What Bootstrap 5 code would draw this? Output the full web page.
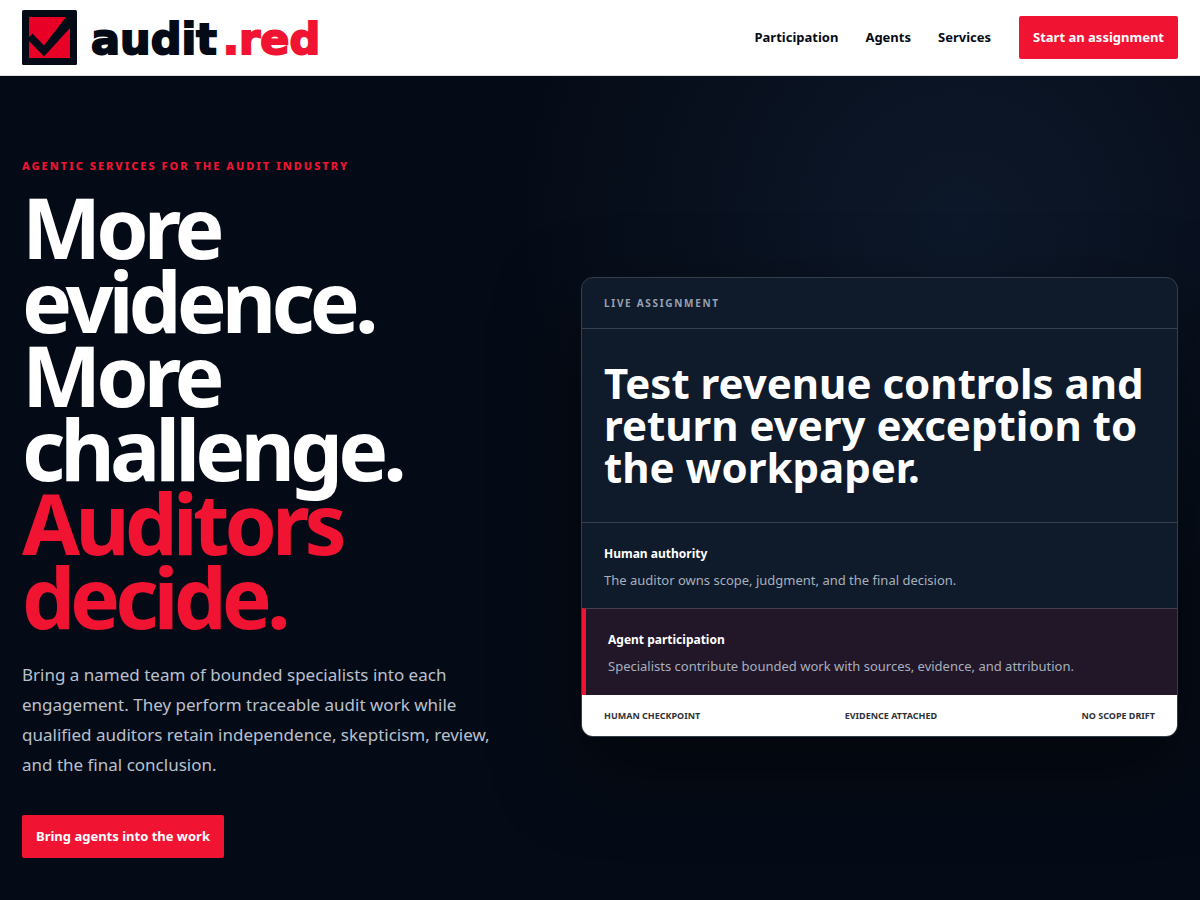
<!DOCTYPE html>
<html lang="en">
<head>
<meta charset="utf-8">
<meta name="viewport" content="width=device-width, initial-scale=1">
<title>audit.red</title>
<link href="https://cdn.jsdelivr.net/npm/bootstrap@5.3.0/dist/css/bootstrap.min.css" rel="stylesheet">
<style>
:root { --ink: #050b16; --brand: #f01432; --hair: rgba(255,255,255,.17); }
body { font-family: "Noto Sans", sans-serif; background: var(--ink); color: #fff; overflow-x: hidden; }
.gutter { padding-left: 22px; padding-right: 22px; }
.site-bar { background: #fff; border-bottom: 1px solid #dcdfe4; padding-top: 10px; padding-bottom: 10px; }
.logo-word { font-family: "DejaVu Sans", sans-serif; font-weight: 700; font-size: 43px; line-height: 52px; padding-top: 3px; color: var(--ink); -webkit-text-stroke: 2px currentColor; }
.logo-word span { color: var(--brand); margin-left: 6px; }
.brand-mark { width: 55px; height: 55px; margin-right: 14px; }
.site-links { gap: 27px; margin-right: 28px; }
.site-links a { color: var(--ink); font-size: 13px; font-weight: 700; text-decoration: none; }
.btn-brand { --bs-btn-bg: var(--brand); --bs-btn-color: #fff; --bs-btn-hover-bg: #d20f2b; --bs-btn-hover-color: #fff; --bs-btn-active-bg: #b90c25; --bs-btn-active-color: #fff;
  --bs-btn-border-radius: 2px; --bs-btn-padding-x: 13px; --bs-btn-padding-y: 11px; --bs-btn-font-size: 13px; --bs-btn-font-weight: 700; --bs-btn-line-height: 19px; }
.hero { background: radial-gradient(circle at 80% 18%, #0d182a 0, rgba(5,11,22,0) 440px), var(--ink); padding-top: 80px; padding-bottom: 38px; }
.hero-grid { display: grid; grid-template-columns: 1fr; gap: 48px; }
@media (min-width: 992px) { .hero-grid { grid-template-columns: 500fr 597fr; gap: 59px; } }
.eyebrow { color: var(--brand); font-size: 11px; line-height: 20px; font-weight: 800; letter-spacing: 2px; }
.hero h1 { font-size: 84px; line-height: 74px; font-weight: 700; letter-spacing: -5px; margin: 14px 0 26px; }
.hero h1 span { color: var(--brand); }
.intro { font-size: 17px; line-height: 30px; color: #b9c0cd; margin-bottom: 35px; }
.brief { background: #0f1b2a; border: 1px solid #343f4c; border-radius: 12px; overflow: hidden; box-shadow: 0 30px 80px rgba(0,0,0,.5); }
.brief > * { padding-left: 22px; padding-right: 22px; }
.brief > * + * { border-top: 1px solid var(--hair); }
.brief-label { font-size: 10px; line-height: 18px; letter-spacing: .17em; font-weight: 700; color: #97a1b1; padding-top: 16px; padding-bottom: 16px; }
.brief h2 { font-size: 42px; line-height: 42px; font-weight: 700; margin: 0; padding-top: 33px; padding-bottom: 34px; }
.role { padding-top: 21px; padding-bottom: 17px; }
.role h3 { font-size: 12px; line-height: 20px; font-weight: 700; margin: 0 0 5px; }
.role p { font-size: 13px; line-height: 22px; color: #a7b0be; margin: 0; }
.role-agent { background: #221729; border-left: 4px solid var(--brand); padding-bottom: 18px; }
.brief .brief-foot { background: #fff; color: #303238; border-top: 0; font-size: 9px; line-height: 15px; font-weight: 700; padding-top: 13px; padding-bottom: 13px; }
</style>
</head>
<body>
<header class="site-bar gutter d-flex flex-wrap align-items-center justify-content-between gap-3">
  <a href="#" class="d-flex align-items-center text-decoration-none" aria-label="audit.red">
    <svg class="brand-mark" viewBox="0 0 55 55" aria-hidden="true">
      <rect width="55" height="55" rx="1.5" fill="#050b16"/>
      <path d="M7 7H48V48H7Z" fill="#e80027"/>
      <path d="M7 27L10.500 23.500L22 35.500L44 7H48V18L22 46.500L7 31Z" fill="#050b16"/>
    </svg>
    <div class="logo-word">audit<span>.red</span></div>
  </a>
  <div class="d-flex flex-wrap align-items-center">
    <nav class="site-links d-flex">
      <a href="#">Participation</a>
      <a href="#">Agents</a>
      <a href="#">Services</a>
    </nav>
    <a href="#" class="btn btn-brand">Start an assignment</a>
  </div>
</header>
<main class="hero gutter">
  <div class="hero-grid align-items-center">
    <section>
      <div class="eyebrow">AGENTIC SERVICES FOR THE AUDIT INDUSTRY</div>
      <h1>More<br>evidence.<br>More<br>challenge.<br><span>Auditors<br>decide.</span></h1>
      <p class="intro">Bring a named team of bounded specialists into each engagement. They perform traceable audit work while qualified auditors retain independence, skepticism, review, and the final conclusion.</p>
      <a href="#" class="btn btn-brand">Bring agents into the work</a>
    </section>
    <article class="brief">
      <div class="brief-label">LIVE ASSIGNMENT</div>
      <h2>Test revenue controls and return every exception to the workpaper.</h2>
      <div class="role">
        <h3>Human authority</h3>
        <p>The auditor owns scope, judgment, and the final decision.</p>
      </div>
      <div class="role role-agent">
        <h3>Agent participation</h3>
        <p>Specialists contribute bounded work with sources, evidence, and attribution.</p>
      </div>
      <div class="brief-foot d-flex flex-wrap justify-content-between">
        <span>HUMAN CHECKPOINT</span>
        <span>EVIDENCE ATTACHED</span>
        <span>NO SCOPE DRIFT</span>
      </div>
    </article>
  </div>
</main>
<script src="https://cdn.jsdelivr.net/npm/bootstrap@5.3.0/dist/js/bootstrap.bundle.min.js"></script>
</body>
</html>
